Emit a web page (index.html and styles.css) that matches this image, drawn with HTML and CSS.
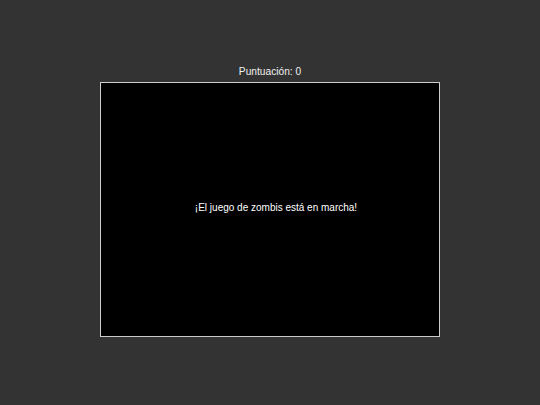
FILE: index.html
```html
<!DOCTYPE html>
<html lang="es">
<head>
<meta charset="utf-8">
<link rel="stylesheet" href="styles.css">
</head>
<body>
<main class="game">
  <div class="score">Puntuación: 0</div>
  <div class="board">
    <p class="message">¡El juego de zombis está en marcha!</p>
  </div>
</main>
</body>
</html>
```
FILE: styles.css
```css
html, body {
  margin: 0;
  padding: 0;
  height: 100%;
}
body {
  background: #333333;
  font-family: "Liberation Sans", Arial, sans-serif;
  color: #ffffff;
}
.game {
  display: flex;
  flex-direction: column;
  align-items: center;
  padding-top: 66px;
}
.score {
  font-size: 10.2px;
  line-height: 12px;
  margin-bottom: 4px;
  color: #f0f0f0;
}
.board {
  width: 338px;
  height: 253px;
  background: #000;
  border: 1px solid #cccccc;
  display: flex;
  align-items: center;
  justify-content: center;
}
.message {
  margin: 0 0 4px 12px;
  font-size: 10px;
  line-height: 12px;
  color: #ffffff;
}
```
